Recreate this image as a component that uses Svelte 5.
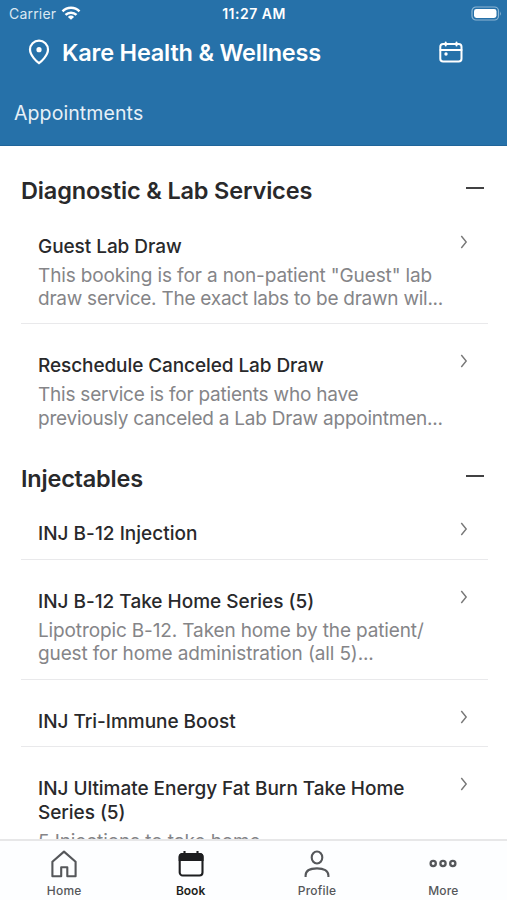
<script>
  const sections = [
    {
      title: 'Diagnostic & Lab Services',
      spacing: -0.16,
      items: [
        {
          title: [['Guest Lab Draw', -0.06]],
          text: [
            ['This booking is for a non-patient "Guest" lab', -0.13],
            ['draw service. The exact labs to be drawn wil...', -0.25]
          ]
        },
        {
          title: [['Reschedule Canceled Lab Draw', -0.09]],
          text: [
            ['This service is for patients who have', -0.22],
            ['previously canceled a Lab Draw appointmen...', -0.23]
          ]
        }
      ]
    },
    {
      title: 'Injectables',
      spacing: -0.2,
      items: [
        { title: [['INJ B-12 Injection', 0.02]], text: [] },
        {
          title: [['INJ B-12 Take Home Series (5)', -0.01]],
          text: [
            ['Lipotropic B-12. Taken home by the patient/', -0.13],
            ['guest for home administration (all 5)...', -0.13]
          ]
        },
        { title: [['INJ Tri-Immune Boost', -0.03]], text: [] },
        {
          title: [['INJ Ultimate Energy Fat Burn Take Home', -0.04], ['Series (5)', -0.05]],
          text: [['5 Injections to take home', -0.1]]
        }
      ]
    }
  ];
</script>

<div class="screen">
  <header>
    <div class="status">
      <div class="carrier">
        <span>Carrier</span>
        <svg width="20" height="14" viewBox="0 0 20 14" fill="none" stroke="#fff" stroke-width="2.5">
          <path d="M1.5 5.4a12 12 0 0 1 17 0" />
          <path d="M4.5 8.9a7.8 7.8 0 0 1 11 0" />
          <path d="M10 13.8 6.9 10.9a4.4 4.4 0 0 1 6.2 0Z" fill="#fff" stroke="none" />
        </svg>
      </div>
      <span class="time">11:27 AM</span>
      <svg class="battery" width="31" height="15" viewBox="0 0 31 15">
        <rect x="1" y="1" width="26.5" height="13" rx="4" fill="none" stroke="#8db6d4" stroke-width="1.2" />
        <rect x="3" y="3" width="22.5" height="9" rx="2.4" fill="#fff" />
        <path d="M29 5.2q1.6 2.3 0 4.6z" fill="#8db6d4" />
      </svg>
    </div>
    <div class="place">
      <svg width="22" height="26" viewBox="0 0 22 26" fill="none" stroke="#fff" stroke-width="2.2">
        <path d="M11 24.2C9 22.8 2 16.6 2 10.6a9 9 0 0 1 18 0c0 6-7 12.2-9 13.6Z" />
        <circle cx="11" cy="10.7" r="2.6" fill="#fff" stroke="none" />
      </svg>
      <h1>Kare Health &amp; Wellness</h1>
      <svg class="cal" width="24" height="22" viewBox="0 0 24 22" fill="none" stroke="#fff" stroke-width="2" stroke-linecap="round">
        <rect x="1.3" y="3" width="21.2" height="17.6" rx="2.8" />
        <path d="M1.5 9h21M6.7 1.4v3M17.5 1.4v3" />
        <circle cx="7" cy="13" r="1.7" fill="#fff" stroke="none" />
      </svg>
    </div>
    <div class="tab">Appointments</div>
  </header>

  <main>
    {#each sections as section}
      <section>
        <div class="head">
          <h2 style="letter-spacing:{section.spacing}px">{section.title}</h2>
          <span class="minus"></span>
        </div>
        {#each section.items as item}
          <article>
            <div class="copy">
              {#each item.title as [line, gap]}
                <div class="name" style="letter-spacing:{gap}px">{line}</div>
              {/each}
              {#if item.text.length}
                <div class="text">
                  {#each item.text as [line, gap]}
                    <div style="letter-spacing:{gap}px">{line}</div>
                  {/each}
                </div>
              {/if}
            </div>
            <svg class="chevron" width="8" height="14" viewBox="0 0 8 14" fill="none" stroke="#777" stroke-width="1.4">
              <path d="m1.3 1 4.9 6-4.9 6" />
            </svg>
          </article>
        {/each}
      </section>
    {/each}
  </main>

  <nav>
    <div class="item">
      <svg width="28" height="28" viewBox="0 0 28 28" fill="none" stroke="#55575a" stroke-width="2.1" stroke-linejoin="round">
        <path d="M2.4 26.2V11.8L14 1.6l11.6 10.2v14.4h-8.3v-8.9h-6.1v8.9Z" />
      </svg>
      <span>Home</span>
    </div>
    <div class="item active">
      <svg width="28" height="28" viewBox="0 0 28 28" fill="none" stroke="#1d1e20" stroke-width="2.1">
        <rect x="2.7" y="4" width="22.8" height="21.5" rx="3" />
        <path d="M2.7 10V6.5Q2.7 4 5.5 4h17q3 0 3 2.5V10Z" fill="#1d1e20" />
        <path d="M7.5 1V5M20.5 1V5" />
      </svg>
      <span>Book</span>
    </div>
    <div class="item">
      <svg width="28" height="28" viewBox="0 0 28 28" fill="none" stroke="#55575a" stroke-width="2.1">
        <ellipse cx="14" cy="7.5" rx="5.3" ry="6" />
        <path d="M2.6 27v-1.4C2.6 20.8 7 18.4 14 18.4s11.4 2.4 11.4 7.2V27" />
      </svg>
      <span>Profile</span>
    </div>
    <div class="item">
      <svg width="28" height="28" viewBox="0 0 28 28" fill="none" stroke="#55575a" stroke-width="2.3">
        <circle cx="4.2" cy="13.5" r="2.6" />
        <circle cx="14" cy="13.5" r="2.6" />
        <circle cx="23.8" cy="13.5" r="2.6" />
      </svg>
      <span>More</span>
    </div>
  </nav>
</div>

<style>
  .screen {
    width: 507px;
    height: 900px;
    display: flex;
    flex-direction: column;
    overflow: hidden;
    background: #fff;
    color: #29292b;
    font-family: Inter, 'Liberation Sans', sans-serif;
    white-space: nowrap;
  }
  svg { display: block; flex: none; }
  h1, h2 { margin: 0; font-weight: 600; }
  header {
    box-sizing: border-box;
    height: 146px;
    flex: none;
    background: #2671a9;
    border-bottom: 1px solid #20659a;
    color: #fff;
  }
  .status {
    height: 27px;
    padding: 0 5px 0 9px;
    display: grid;
    grid-template-columns: 1fr auto 1fr;
    align-items: center;
    font-size: 14px;
    line-height: 27px;
  }
  .carrier { display: flex; gap: 5px; align-items: center; letter-spacing: 0.2px; color: #dbe8f2; }
  .carrier svg { margin-top: -2px; }
  .time { font-weight: 600; letter-spacing: 0.5px; margin-right: 3px; }
  .battery { justify-self: end; }
  .place { height: 50px; padding: 0 44px 0 28px; display: flex; align-items: center; }
  h1 { margin-left: 12px; font-size: 23.5px; letter-spacing: -0.21px; line-height: 51px; }
  .cal { margin-left: auto; }
  .tab { padding-left: 14px; margin-top: 22px; font-size: 19.5px; letter-spacing: 0.1px; line-height: 28px; color: #e6f0f7; }
  main { flex: 1; min-height: 0; overflow: hidden; padding: 9px 19px 0 21px; }
  .head { height: 49.5px; padding-right: 4px; display: flex; justify-content: space-between; }
  h2 { font-size: 23.5px; line-height: 71px; }
  .minus { width: 18px; height: 2px; margin-top: 32px; background: #414143; }
  article {
    display: flex;
    justify-content: space-between;
    padding: 30px 20px 12.5px 17px;
    border-bottom: 1px solid #e9e9eb;
  }
  article:last-child { border-color: transparent; padding-bottom: 11.5px; }
  .name { font-size: 19px; line-height: 24px; font-weight: 500; }
  .text { margin-top: 5px; font-size: 19px; line-height: 23.6px; color: #858588; }
  nav {
    box-sizing: border-box;
    flex: none;
    height: 61px;
    padding: 9px 0 0 1px;
    border-top: 2px solid #e7e7e8;
    display: grid;
    grid-template-columns: repeat(4, 126.4px);
    color: #55575a;
    background: #fdfeff;
  }
  .item { display: flex; flex-direction: column; align-items: center; }
  .item span { margin-top: 4px; font-size: 12px; line-height: 18px; font-weight: 500; letter-spacing: 0.2px; }
  .active span { color: #1d1e20; font-weight: 600; letter-spacing: 0; }
</style>
